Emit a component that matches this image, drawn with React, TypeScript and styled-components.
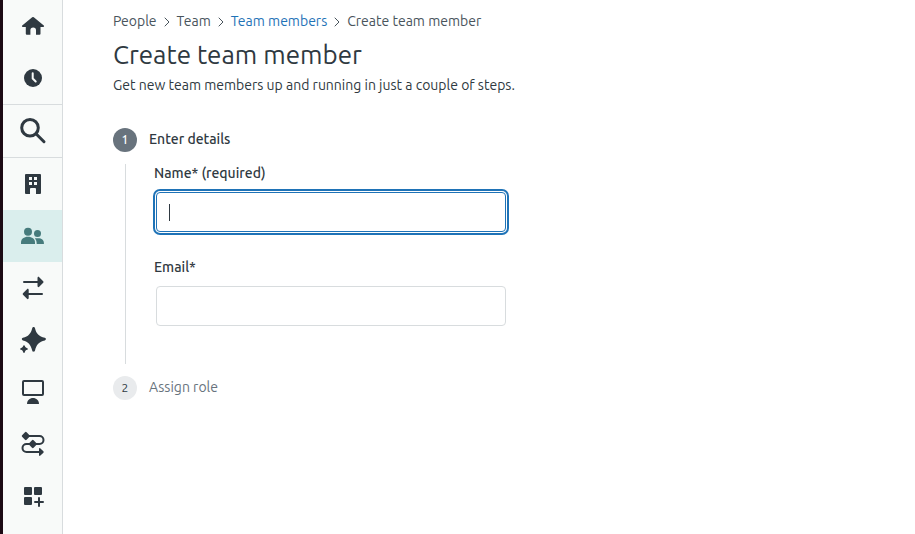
import React from "react";
import styled, { createGlobalStyle } from "styled-components";

const ink = "#2f3941";
const blue = "#1f73b7";
const line = "#d8dcde";
const surface = "#f8faf9";
const strong = 550;

const GlobalStyle = createGlobalStyle`
  *, *::before, *::after { box-sizing: border-box; }
  body {
    margin: 0;
    background: #fff;
    color: ${ink};
    font-family: Ubuntu, "Noto Sans", sans-serif;
    font-size: 14px;
    line-height: 20px;
  }
`;

const Page = styled.div`
  display: flex;
  min-height: 100vh;
`;

const Sidebar = styled.nav`
  flex: none;
  width: 63px;
  background: ${surface};
  border-left: 3px solid #1b0a14;
  border-right: 1px solid ${line};
`;

const NavGroup = styled.ul`
  margin: 0;
  padding: 0;
  list-style: none;

  & + & {
    border-top: 1px solid ${line};
  }
`;

const NavButton = styled.button<{ $active?: boolean }>`
  display: flex;
  align-items: center;
  width: 100%;
  height: 52px;
  padding: 0 15px 0 16px;
  border: 0;
  background: ${(p) => (p.$active ? "#daeeed" : "transparent")};
  color: ${(p) => (p.$active ? "#467b7c" : ink)};
  cursor: pointer;
`;

const Glyph = styled.svg`
  flex: none;
  width: 28px;
  height: 28px;
  fill: currentColor;
`;

const Main = styled.main`
  flex: 1;
  min-width: 0;
  padding: 11px 50px 24px;
`;

const Crumbs = styled.ol`
  display: flex;
  align-items: center;
  gap: 6px;
  margin: 0;
  padding: 0;
  list-style: none;
  color: #49545c;
`;

const Crumb = styled.li`
  display: flex;
  align-items: center;
  gap: 6px;
`;

const CrumbLink = styled.a`
  color: ${blue};
  text-decoration: none;
`;

const Chevron = styled.svg`
  width: 8px;
  height: 12px;
  fill: none;
  stroke: #49545c;
`;

const Title = styled.h1`
  margin: 8px 0 0;
  font-size: 26px;
  line-height: 32px;
  font-weight: 400;
`;

const Intro = styled.p`
  margin: 4px 0 32px;
`;

const Steps = styled.ol`
  margin: 0;
  padding: 0;
  list-style: none;
`;

const StepHead = styled.div<{ $current?: boolean }>`
  display: flex;
  align-items: center;
  gap: 12px;
  height: 26px;
  color: ${(p) => (p.$current ? ink : "#68737d")};
  font-weight: ${(p) => (p.$current ? strong : 400)};
`;

const StepTitle = styled.span`
  padding-bottom: 2px;
`;

const Badge = styled.span<{ $current?: boolean }>`
  display: flex;
  align-items: center;
  justify-content: center;
  width: 24px;
  height: 24px;
  border-radius: 50%;
  font-size: 12px;
  font-weight: ${(p) => (p.$current ? strong : 400)};
  background: ${(p) => (p.$current ? "#68737d" : "#e9ebed")};
  color: ${(p) => (p.$current ? "#fff" : ink)};
`;

const StepBody = styled.div`
  margin: 11px 0 11px 12px;
  padding: 0 0 38px 28px;
  border-left: 1px solid ${line};
`;

const Field = styled.div`
  & + & {
    margin-top: 26px;
  }
`;

const Label = styled.label`
  display: block;
  margin-bottom: 10px;
  font-weight: ${strong};
  line-height: 18px;
`;

const InputWrap = styled.div`
  position: relative;
  max-width: 350px;
  margin-left: 2px;
`;

const TextInput = styled.input<{ $focused?: boolean }>`
  display: block;
  width: 100%;
  height: 40px;
  padding: 0 12px;
  border: 1px solid ${(p) => (p.$focused ? blue : line)};
  border-radius: 4px;
  outline: none;
  box-shadow: ${(p) => (p.$focused ? `0 0 0 1px #fff, 0 0 0 3px ${blue}` : "none")};
  background: #fff;
  color: ${ink};
  font: inherit;
  caret-color: transparent;
`;

const Caret = styled.span`
  position: absolute;
  top: 12px;
  left: 13px;
  width: 1px;
  height: 17px;
  background: ${ink};
  pointer-events: none;
`;

type Item = { label: string; active?: boolean; icon: React.ReactNode };

const groups: Item[][] = [
  [
    {
      label: "Home",
      icon: (
        <path d="M13.2 5.3a1.3 1.3 0 0 1 1.6 0l10 8.3c.6.6.2 1.4-.6 1.4H21.5v6.8a1 1 0 0 1-1 1H17v-4.5a2.8 2.8 0 0 0-5.6 0v4.5H7.8a1 1 0 0 1-1-1V15H3.8c-.8 0-1.2-.8-.6-1.4z" />
      ),
    },
    {
      label: "Recent",
      icon: (
        <>
          <circle cx="14" cy="14" r="9" />
          <path d="M13.7 9.3v5.2l3 3" fill="none" stroke={surface} strokeWidth="2" strokeLinecap="round" strokeLinejoin="round" />
        </>
      ),
    },
  ],
  [
    {
      label: "Search",
      icon: (
        <g fill="none" stroke="currentColor" strokeWidth="3">
          <circle cx="11" cy="10.7" r="8.3" />
          <path d="M17 16.7l8 8" strokeLinecap="round" />
        </g>
      ),
    },
  ],
  [
    {
      label: "Organizations",
      icon: (
        <path
          fillRule="evenodd"
          d="M7 4h14a1 1 0 0 1 1 1v18a1 1 0 0 1-1 1h-4v-5a1 1 0 0 0-1-1h-4a1 1 0 0 0-1 1v5H7a1 1 0 0 1-1-1V5a1 1 0 0 1 1-1zM10 7v3h3V7zM15 7v3h3V7zM10 12v3h3v-3zM15 12v3h3v-3z"
        />
      ),
    },
    {
      label: "People",
      active: true,
      icon: (
        <>
          <circle cx="9" cy="9.8" r="4" />
          <circle cx="18.5" cy="11.4" r="3.5" />
          <path d="M2 22v-1.5c0-3.5 3-5.7 7-5.7s7 2.2 7 5.7V22z" />
          <path d="M15.8 16.3h3.5c3.3 0 5.6 2 5.6 4.7v1h-7.2c0-2.4-.5-4.2-1.9-5.7z" />
        </>
      ),
    },
    {
      label: "Transfers",
      icon: (
        <>
          <path d="M5 8h15M9 20h14" stroke="currentColor" strokeWidth="2" strokeLinecap="round" />
          <path d="M18.5 4c0-1 1-1.5 1.7-.8l4 4c.5.5.5 1.1 0 1.6l-4 4c-.7.7-1.7.2-1.7-.8zM9.700 16c0-1-1-1.500-1.700-.8l-4 4c-.5.5-.5 1.1 0 1.6l4 4c.7.7 1.7.2 1.7-.8z" />
        </>
      ),
    },
    {
      label: "AI",
      icon: (
        <>
          <path d="M13.2 2.2c.4-1.6 2.4-1.6 2.8 0 1.4 5.6 3.8 8 9.8 9.6 1.5.4 1.5 2.2 0 2.6-5.8 1.4-8.4 4-9.8 10.2-.4 1.6-2.4 1.6-2.8 0-1.4-6-3.8-8.8-9.3-10.2-1.5-.4-1.5-2.2 0-2.6 5.5-1.5 7.9-4 9.3-9.6z" />
          <path d="M4.2 19.8c.2-.9 1.4-.9 1.6 0 .4 1.4 1 2 2.4 2.4.9.2.9 1.4 0 1.6-1.4.4-2 1-2.4 2.4-.2.9-1.4.9-1.6 0-.4-1.4-1-2-2.4-2.4-.9-.2-.9-1.4 0-1.6 1.4-.4 2-1 2.4-2.4z" />
        </>
      ),
    },
    {
      label: "Workspaces",
      icon: (
        <>
          <rect x="4" y="3" width="20" height="14" rx="1" fill="none" stroke="currentColor" strokeWidth="2" />
          <path d="M8 26c0-3.5 2.7-6 6-6s6 2.500 6 6z" />
        </>
      ),
    },
    {
      label: "Objects and rules",
      icon: (
        <>
          <path d="M7 6h13.5a4 4 0 0 1 0 8H7.5a4 4 0 0 0 0 8H22" fill="none" stroke="currentColor" strokeWidth="2" />
          <path d="M6 2.2q.8-.8 1.6 0l2.9 3q.8.8 0 1.6l-2.9 3q-.8.8-1.6 0l-2.9-3q-.8-.8 0-1.6zM13 10.2q.8-.8 1.6 0l2.9 3q.8.8 0 1.6l-2.9 3q-.8.8-1.6 0l-2.9-3q-.8-.8 0-1.6zM20 19c0-1 .8-1.2 1.4-.6l3 2.9q.7.7 0 1.4l-3 2.9c-.6.6-1.4.4-1.4-.6z" />
        </>
      ),
    },
    {
      label: "Apps and integrations",
      icon: (
        <>
          <rect x="5" y="5" width="8" height="8" rx="1" />
          <rect x="15" y="5" width="8" height="8" rx="1" />
          <rect x="5" y="15" width="8" height="8" rx="1" />
          <path d="M20 16v8M16 20h8" stroke="currentColor" strokeWidth="2" strokeLinecap="round" />
        </>
      ),
    },
  ],
];

const crumbs = [
  { text: "People" },
  { text: "Team" },
  { text: "Team members", href: "#team-members" },
  { text: "Create team member" },
];

export default function App() {
  return (
    <Page>
      <GlobalStyle />
      <Sidebar aria-label="Main">
        {groups.map((items, g) => (
          <NavGroup key={g}>
            {items.map((item) => (
              <li key={item.label}>
                <NavButton type="button" aria-label={item.label} $active={item.active}>
                  <Glyph viewBox="0 0 28 28" aria-hidden="true">
                    {item.icon}
                  </Glyph>
                </NavButton>
              </li>
            ))}
          </NavGroup>
        ))}
      </Sidebar>
      <Main>
        <nav aria-label="Breadcrumb">
          <Crumbs>
            {crumbs.map((crumb, i) => (
              <Crumb key={crumb.text}>
                {i > 0 && (
                  <Chevron viewBox="0 0 8 12" aria-hidden="true">
                    <path d="M2 3l4 4-4 4" strokeLinecap="round" />
                  </Chevron>
                )}
                {crumb.href ? <CrumbLink href={crumb.href}>{crumb.text}</CrumbLink> : <span>{crumb.text}</span>}
              </Crumb>
            ))}
          </Crumbs>
        </nav>
        <Title>Create team member</Title>
        <Intro>Get new team members up and running in just a couple of steps.</Intro>
        <Steps>
          <li>
            <StepHead $current>
              <Badge $current>1</Badge>
              <StepTitle>Enter details</StepTitle>
            </StepHead>
            <StepBody>
              <Field>
                <Label htmlFor="name">Name* (required)</Label>
                <InputWrap>
                  <TextInput id="name" type="text" required $focused />
                  <Caret />
                </InputWrap>
              </Field>
              <Field>
                <Label htmlFor="email">Email*</Label>
                <InputWrap>
                  <TextInput id="email" type="email" required />
                </InputWrap>
              </Field>
            </StepBody>
          </li>
          <li>
            <StepHead>
              <Badge>2</Badge>
              <StepTitle>Assign role</StepTitle>
            </StepHead>
          </li>
        </Steps>
      </Main>
    </Page>
  );
}
